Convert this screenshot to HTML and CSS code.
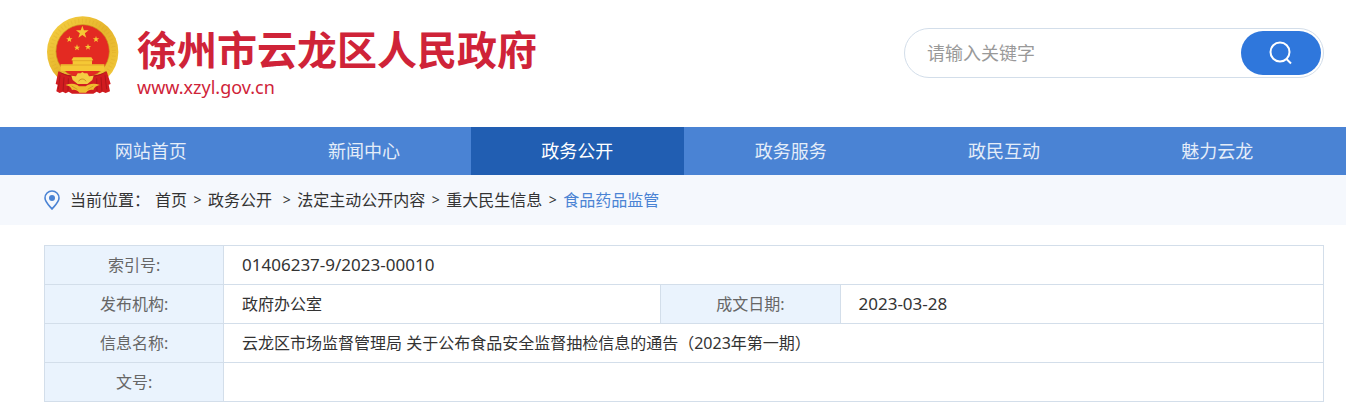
FILE: index.html
```
<!DOCTYPE html>
<html lang="zh-CN">
<head>
    <meta charset="UTF-8">
    <meta name="viewport" content="width=device-width, initial-scale=1.0">
    <title>徐州市云龙区人民政府</title>
    <link rel="stylesheet" href="styles.css">
</head>
<body>
    <header class="header wrap">
        <a class="logo" href="#">
            <svg class="emblem" viewBox="33 24 216 234" aria-hidden="true">
                <defs>
                    <linearGradient id="gold" x1="0" y1="0" x2="1" y2="1">
                        <stop offset="0" stop-color="#f6d244"/>
                        <stop offset="0.5" stop-color="#e6b52c"/>
                        <stop offset="1" stop-color="#f3cb3c"/>
                    </linearGradient>
                    <path id="star" d="M0-10 2.4-3.1 9.5-3.1 3.8 1.2 5.9 8.1 0 4 -5.9 8.1 -3.8 1.2 -9.5-3.1 -2.4-3.1Z"/>
                </defs>
                <circle cx="140" cy="132" r="107" fill="url(#gold)"/>
                <circle cx="140" cy="132" r="94" fill="none" stroke="#d39a20" stroke-width="12" stroke-dasharray="3 8" opacity="0.22"/>
                <circle cx="140" cy="130" r="80" fill="#e32a22" stroke="#c98f1c" stroke-width="2"/>
                <g fill="#f5c835">
                    <use href="#star" transform="translate(139 73) scale(2)"/>
                    <use href="#star" transform="translate(100 94)"/>
                    <use href="#star" transform="translate(180 94)"/>
                    <use href="#star" transform="translate(123 119)"/>
                    <use href="#star" transform="translate(156 117)"/>
                    <path d="M112 148h54l6 9h-4v12h37v20h-131v-20h36v-12h-4z"/>
                </g>
                <path d="M108 158h62M74 171h131" stroke="#d99b24" stroke-width="2"/>
                <!-- ribbons -->
                <path d="M67 190c16 10 38 13 49 13h46c18 0 36-4 50-13l12 38-6 2 4 20-13 5-9-4-9 5-9-5-10 6H108l-10-6-9 5-9-5-9 4-10-5 4-20-6-2z" fill="#d11c20"/>
                <path d="M72 202l-5 42M84 208l-3 42M97 211l-1 38M182 211l1 38M195 208l3 42M207 202l5 42" stroke="#9d1217" stroke-width="2"/>
                <path d="M70 191c20 14 42 15 69 15s50-1 70-15" fill="none" stroke="#9d1217" stroke-width="2"/>
                <!-- gear and wheat stems -->
                <path d="M106 203l14 2 5-9h9l5-4 6 4h9l5 9 14-2-4 13-15 12H125l-15-12z" fill="#f4cc43"/>
                <path d="M88 231c18-6 33-4 41 4h20c9-8 26-10 43-4-11 3-16 5-20 15-9-2-15 0-22 8h-20c-7-8-13-10-22-8-3-9-9-13-20-15z" fill="#efbd2f"/>
                <path d="M128 220c4-9 18-9 22 0" fill="none" stroke="#c98a1e" stroke-width="3"/>
                <path d="M107 234l17 10M172 234l-17 10" stroke="#c98a1e" stroke-width="2"/>
            </svg>
            <span class="logo-text">
                <strong class="site-name">徐州市云龙区人民政府</strong>
                <span class="site-url">www.xzyl.gov.cn</span>
            </span>
        </a>
        <form class="search" role="search">
            <input type="text" class="search-input" aria-label="请输入关键字" placeholder="请输入关键字">
            <button type="button" class="search-btn" aria-label="搜索">
                <svg class="search-icon" viewBox="0 0 24 24" aria-hidden="true">
                    <circle cx="11" cy="11" r="9.5"/>
                    <path d="M17.5 18l4.5 4.5"/>
                </svg>
            </button>
        </form>
    </header>

    <nav class="nav">
        <div class="nav-list wrap">
            <a href="#">网站首页</a>
            <a href="#">新闻中心</a>
            <a href="#" class="active">政务公开</a>
            <a href="#">政务服务</a>
            <a href="#">政民互动</a>
            <a href="#">魅力云龙</a>
        </div>
    </nav>

    <div class="position">
        <div class="crumbs wrap">
            <svg class="pin" viewBox="0 0 16 20" aria-hidden="true">
                <path d="M8 1a7 7 0 0 0-7 7c0 4 4.500 8 7 11 2.500-3 7-7 7-11a7 7 0 0 0-7-7z"/>
                <circle cx="8" cy="8" r="3"/>
            </svg>
            <span class="label">当前位置：</span>
            <a href="#">首页</a>
            <span class="sep">&gt;</span>
            <a href="#">政务公开&nbsp;</a>
            <span class="sep">&gt;</span>
            <a href="#">法定主动公开内容</a>
            <span class="sep">&gt;</span>
            <a href="#">重大民生信息</a>
            <span class="sep">&gt;</span>
            <a href="#" class="current">食品药品监管</a>
        </div>
    </div>

    <main class="content wrap">
        <table class="info">
            <colgroup>
                <col class="col-label">
                <col class="col-org">
                <col class="col-label">
                <col>
            </colgroup>
            <tr>
                <th scope="row">索引号:</th>
                <td colspan="3" class="num">01406237-9/2023-00010</td>
            </tr>
            <tr>
                <th scope="row">发布机构:</th>
                <td>政府办公室</td>
                <th scope="row">成文日期:</th>
                <td class="num">2023-03-28</td>
            </tr>
            <tr>
                <th scope="row">信息名称:</th>
                <td colspan="3">云龙区市场监督管理局 关于公布食品安全监督抽检信息的通告（2023年第一期）</td>
            </tr>
            <tr>
                <th scope="row">文号:</th>
                <td colspan="3"></td>
            </tr>
        </table>
    </main>
</body>
</html>
```
FILE: styles.css
```
* {
    box-sizing: border-box;
}

body {
    margin: 0;
    font-family: "Noto Sans", "Noto Sans CJK SC", sans-serif;
    font-size: 16px;
    color: #333;
    background-color: #fff;
}

a {
    color: inherit;
    text-decoration: none;
}

.wrap {
    padding-left: 44px;
    padding-right: 22px;
}

/* header */
.header {
    display: flex;
    justify-content: space-between;
    align-items: flex-start;
    padding-top: 16px;
    padding-bottom: 29px;
}

.logo {
    display: flex;
    gap: 18px;
    padding-left: 3px;
    color: #cf2338;
}

.emblem {
    width: 72px;
    height: 78px;
}

.logo-text {
    display: flex;
    flex-direction: column;
    gap: 4px;
    padding-top: 8px;
}

.site-name {
    font-family: "Noto Sans CJK SC", sans-serif;
    font-size: 40px;
    line-height: 48px;
}

.site-url {
    font-size: 18px;
    line-height: 22px;
}

.search {
    display: flex;
    align-items: center;
    width: 420px;
    height: 50px;
    margin-top: 12px;
    padding: 0 2px 0 22px;
    border: 1px solid #d3deea;
    border-radius: 25px;
}

.search-input {
    flex: 1;
    min-width: 0;
    padding: 0;
    border: none;
    outline: none;
    background: none;
    font-family: inherit;
    font-size: 18px;
    color: #333;
}

.search-input::placeholder {
    color: #999;
}

.search-btn {
    display: flex;
    align-items: center;
    justify-content: center;
    width: 80px;
    height: 44px;
    padding: 0;
    border: none;
    border-radius: 22px;
    background-color: #2f77dc;
    cursor: pointer;
}

.search-icon {
    width: 24px;
    height: 24px;
    fill: none;
    stroke: #fff;
    stroke-width: 2;
}

/* navigation */
.nav {
    background-color: #4a83d4;
}

.nav-list {
    display: flex;
}

.nav-list a {
    flex: 1;
    font-size: 18px;
    line-height: 48px;
    text-align: center;
    color: #e4edf9;
}

.nav-list a.active {
    background-color: #215eb2;
    color: #fff;
}

/* breadcrumb */
.position {
    background-color: #f5f8fd;
}

.crumbs {
    display: flex;
    align-items: center;
    line-height: 50px;
}

.pin {
    width: 16px;
    height: 20px;
    margin-right: 10px;
    fill: none;
    stroke: #4a83d4;
    stroke-width: 1.6;
}

.pin circle {
    fill: #4a83d4;
    stroke: none;
}

.label {
    margin-right: 5px;
}

.sep {
    width: 21px;
    font-size: 14px;
    text-align: center;
}

.current {
    color: #4a83d4;
}

/* document info */
.content {
    padding-top: 20px;
    padding-bottom: 9px;
}

.info {
    width: 100%;
    table-layout: fixed;
    border-collapse: collapse;
}

.col-label {
    width: 14%;
}

.col-org {
    width: 34.2%;
}

.info th,
.info td {
    height: 39px;
    padding: 0 18px;
    border: 1px solid #d3deea;
    line-height: 24px;
    text-align: left;
}

.info th {
    font-weight: normal;
    text-align: center;
    color: #666;
    background-color: #eaf3fd;
}

.info .num {
    font-size: 17px;
}
```
